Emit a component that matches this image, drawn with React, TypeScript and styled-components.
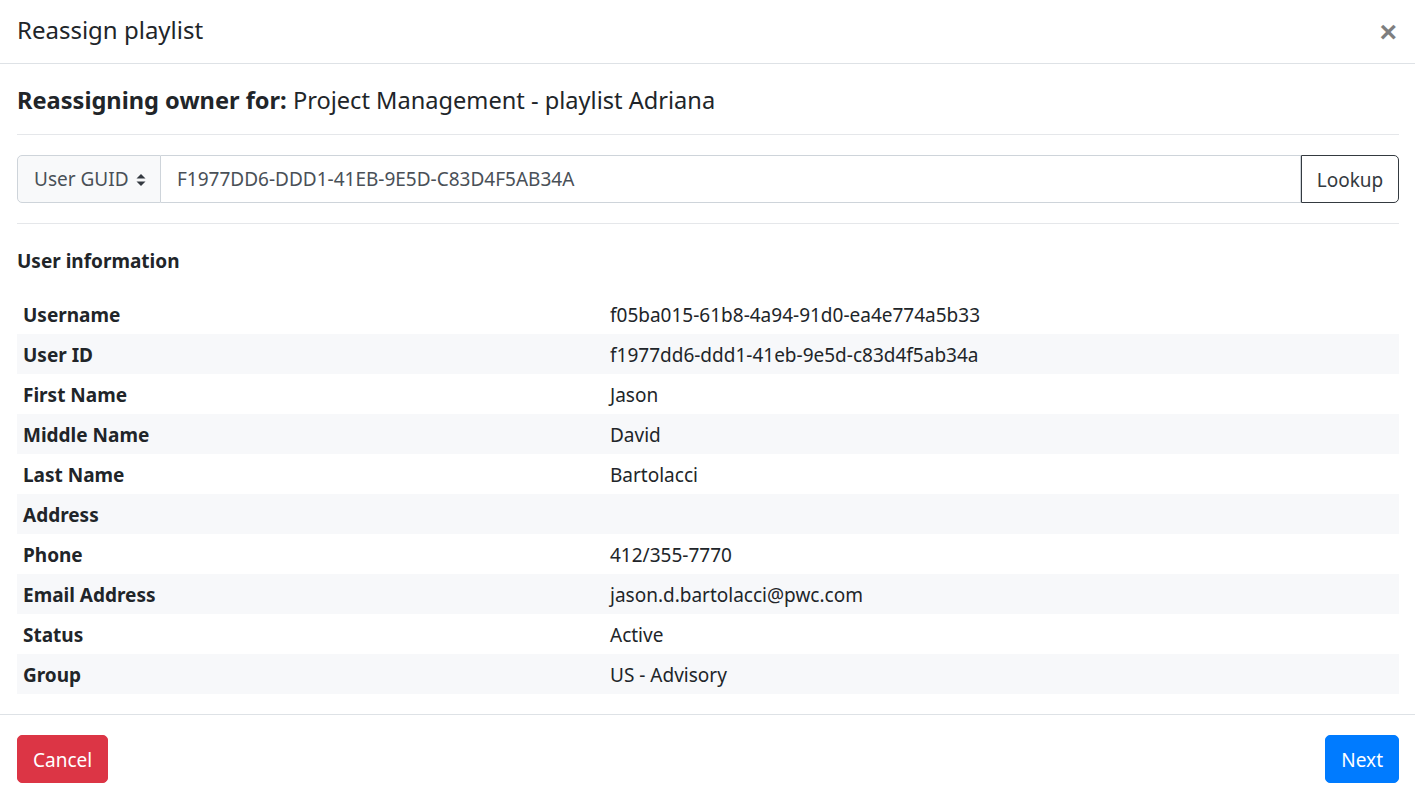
import React from "react";
import styled, { createGlobalStyle } from "styled-components";

const Global = createGlobalStyle`
  html, body { margin: 0; padding: 0; background: #fff; }
  body {
    font-family: "Noto Sans", "Open Sans", sans-serif;
    color: #212529;
    font-size: 20px;
    line-height: 1.5;
  }
  * { box-sizing: border-box; }
`;

const Modal = styled.div`
  width: 1415px;
  min-height: 795px;
  display: flex;
  flex-direction: column;
  background: #fff;
`;

const Header = styled.div`
  height: 64px;
  padding: 0 17px;
  display: flex;
  align-items: center;
  justify-content: space-between;
  border-bottom: 1px solid #dee2e6;
`;

const Title = styled.h5`
  margin: 0;
  font-size: 24px;
  font-weight: 400;
  line-height: 30px;
  padding-bottom: 3px;
`;

const Close = styled.button`
  border: 0;
  background: transparent;
  padding: 0;
  margin: 0 1px 0 0;
  font-family: "Liberation Sans", Arial, sans-serif;
  font-size: 30px;
  font-weight: 700;
  line-height: 1;
  color: #000;
  opacity: 0.5;
  cursor: pointer;
`;

const Body = styled.div`
  padding: 16px 16px 20px 17px;
  display: flex;
  flex-direction: column;
`;

const Heading = styled.h4`
  margin: 0;
  padding-top: 2px;
  height: 36px;
  font-size: 23.6px;
  line-height: 36px;
  font-weight: 400;
`;

const Strong = styled.strong`
  font-weight: 700;
`;

const Rule = styled.hr<{ $top: number; $bottom: number }>`
  margin: ${(p) => p.$top}px 0 ${(p) => p.$bottom}px;
  border: 0;
  border-top: 1px solid #e5e7ea;
  height: 0;
`;

const InputGroup = styled.div`
  display: flex;
  height: 48px;
`;

const SelectBox = styled.div`
  width: 144px;
  display: flex;
  align-items: center;
  justify-content: space-between;
  padding: 1px 14px 0 16px;
  border: 1px solid #ced4da;
  border-radius: 5px 0 0 5px;
  background: #f8f9fa;
  color: #495057;
  font-size: 19px;
`;

const TextInput = styled.div`
  flex: 1;
  display: flex;
  align-items: center;
  padding: 1px 16px 0;
  border: 1px solid #ced4da;
  border-left: 0;
  color: #495057;
  font-size: 19px;
`;

const LookupButton = styled.button`
  width: 98px;
  border: 1px solid #343a40;
  border-radius: 0 5px 5px 0;
  background: #fff;
  color: #343a40;
  font-family: inherit;
  font-size: 19px;
  padding: 2px 0 0;
  cursor: pointer;
`;

const SectionTitle = styled.h6`
  margin: 0 0 22px;
  padding-top: 1px;
  height: 24px;
  font-size: 19px;
  font-weight: 700;
  line-height: 24px;
`;

const Table = styled.div`
  display: grid;
  grid-template-columns: 587px 1fr;
`;

const Cell = styled.div<{ $striped: boolean; $bold?: boolean }>`
  height: 40px;
  display: flex;
  align-items: center;
  padding: 3px 6px 0;
  background: ${(p) => (p.$striped ? "#f7f8fa" : "transparent")};
  font-weight: ${(p) => (p.$bold ? 700 : 400)};
  font-size: 19px;
`;

const Footer = styled.div`
  border-top: 1px solid #dee2e6;
  padding: 20px 16px 12px 17px;
  display: flex;
  justify-content: space-between;
`;

const Button = styled.button<{ $variant: "danger" | "primary" }>`
  height: 48px;
  padding: 2px 15px 0;
  border: 1px solid ${(p) => (p.$variant === "danger" ? "#dc3545" : "#007bff")};
  background: ${(p) => (p.$variant === "danger" ? "#dc3545" : "#007bff")};
  color: #fff;
  border-radius: 5px;
  font-family: inherit;
  font-size: 19px;
  cursor: pointer;
`;

const rows: [string, string][] = [
  ["Username", "f05ba015-61b8-4a94-91d0-ea4e774a5b33"],
  ["User ID", "f1977dd6-ddd1-41eb-9e5d-c83d4f5ab34a"],
  ["First Name", "Jason"],
  ["Middle Name", "David"],
  ["Last Name", "Bartolacci"],
  ["Address", ""],
  ["Phone", "412/355-7770"],
  ["Email Address", "jason.d.bartolacci@pwc.com"],
  ["Status", "Active"],
  ["Group", "US - Advisory"],
];

const SortArrows = () => (
  <svg width="10" height="14" viewBox="0 0 10 14" aria-hidden="true">
    <path d="M5 1 L9.5 5.5 H0.5 Z" fill="#343a40" />
    <path d="M5 13 L9.5 8.5 H0.5 Z" fill="#343a40" />
  </svg>
);

export default function App() {
  return (
    <>
      <Global />
      <Modal>
        <Header>
          <Title>Reassign playlist</Title>
          <Close aria-label="Close">×</Close>
        </Header>
        <Body>
          <Heading>
            <Strong>Reassigning owner for:</Strong> Project Management - playlist Adriana
          </Heading>
          <Rule $top={18} $bottom={20} />
          <InputGroup>
            <SelectBox>
              <span>User GUID</span>
              <SortArrows />
            </SelectBox>
            <TextInput>F1977DD6-DDD1-41EB-9E5D-C83D4F5AB34A</TextInput>
            <LookupButton>Lookup</LookupButton>
          </InputGroup>
          <Rule $top={20} $bottom={24} />
          <SectionTitle>User information</SectionTitle>
          <Table>
            {rows.map(([k, v], i) => (
              <React.Fragment key={k}>
                <Cell $striped={i % 2 === 1} $bold>
                  {k}
                </Cell>
                <Cell $striped={i % 2 === 1}>{v}</Cell>
              </React.Fragment>
            ))}
          </Table>
        </Body>
        <Footer>
          <Button $variant="danger">Cancel</Button>
          <Button $variant="primary">Next</Button>
        </Footer>
      </Modal>
    </>
  );
}
